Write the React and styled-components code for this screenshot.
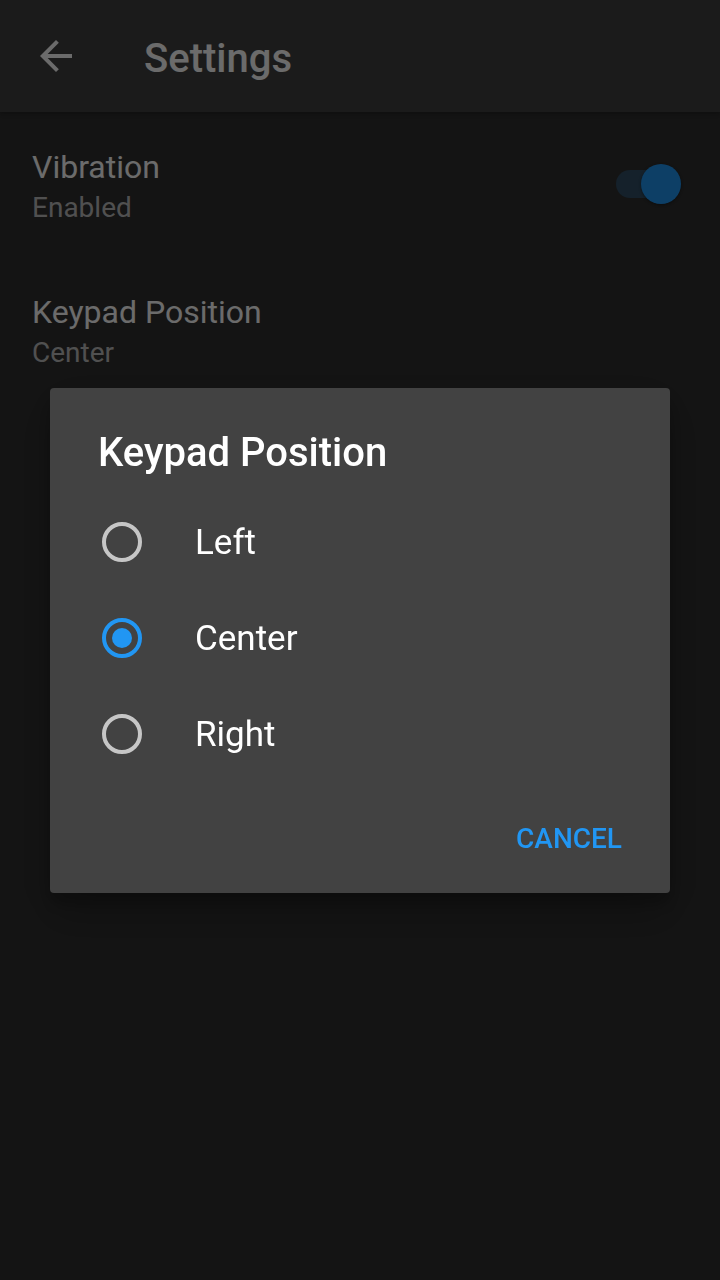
import styled, { createGlobalStyle } from "styled-components";

const GlobalStyle = createGlobalStyle`
    html, body {
        margin: 0;
        padding: 0;
        background: #303030;
        font-family: Roboto, "Liberation Sans", sans-serif;
        -webkit-font-smoothing: antialiased;
    }
`

const StylePage = styled.div`
    width: 720px;
    min-height: 1280px;
    background: #303030;
    color: #ffffff;
`

const StyleAppBar = styled.header`
    height: 112px;
    background: #424242;
    display: flex;
    align-items: center;
    padding-left: 32px;
    box-sizing: border-box;
    box-shadow: 0 2px 4px rgba(0,0,0,.25);
`

const StyleIconButton = styled.button`
    width: 48px;
    height: 48px;
    padding: 0;
    border: none;
    background: none;
    color: #ffffff;
    display: flex;
`

const StyleAppTitle = styled.h1`
    margin: 6px 0 0 64px;
    font-size: 40px;
    line-height: 48px;
    font-weight: 500;
    color: #ffffff;
`

const StyleList = styled.ul`
    list-style: none;
    margin: 0;
    padding: 0;
`

const StyleItem = styled.li`
    height: 145px;
    box-sizing: border-box;
    padding: 35px 39px 0 32px;
    display: flex;
    align-items: flex-start;
    justify-content: space-between;
`

const StyleItemText = styled.div`
    display: flex;
    flex-direction: column;
`

const StyleItemTitle = styled.span`
    font-size: 32px;
    line-height: 40px;
`

const StyleItemSub = styled.span`
    margin-top: 3px;
    font-size: 28px;
    line-height: 36px;
    color: rgba(255,255,255,.7);
`

const StyleSwitch = styled.div`
    position: relative;
    width: 65px;
    height: 40px;
    margin-top: 17px;
    display: flex;
    align-items: center;
`

const StyleTrack = styled.div`
    width: 58px;
    height: 28px;
    border-radius: 14px;
    background: #324f66;
`

const StyleThumb = styled.div`
    position: absolute;
    right: 0;
    top: 0;
    width: 40px;
    height: 40px;
    border-radius: 50%;
    background: #2196f3;
    box-shadow: 0 1px 3px rgba(0,0,0,.4);
`

const StyleScrim = styled.div`
    position: fixed;
    inset: 0;
    background: rgba(0,0,0,.58);
    display: flex;
    align-items: center;
    justify-content: center;
`

const StyleDialog = styled.div`
    width: 620px;
    height: 505px;
    box-sizing: border-box;
    background: #424242;
    border-radius: 4px;
    padding-top: 41px;
    display: flex;
    flex-direction: column;
    box-shadow: 0 24px 38px rgba(0,0,0,.14), 0 9px 46px rgba(0,0,0,.12), 0 11px 15px rgba(0,0,0,.2);
`

const StyleDialogTitle = styled.h2`
    margin: 0 0 17px 48px;
    font-size: 40px;
    line-height: 48px;
    font-weight: 500;
    color: #ffffff;
`

const StyleOption = styled.label`
    height: 96px;
    display: flex;
    align-items: center;
    padding-left: 52px;
`

const StyleRadio = styled.span`
    width: 40px;
    height: 40px;
    box-sizing: border-box;
    border-radius: 50%;
    border: 4px solid ${p => p.checked ? "#2196f3" : "rgba(255,255,255,.7)"};
    display: flex;
    align-items: center;
    justify-content: center;
    &::after {
        content: "";
        width: 20px;
        height: 20px;
        border-radius: 50%;
        background: #2196f3;
        display: ${p => p.checked ? "block" : "none"};
    }
`

const StyleOptionLabel = styled.span`
    margin-left: 53px;
    padding-top: 3px;
    font-size: 35px;
    line-height: 42px;
    color: #ffffff;
`

const StyleActions = styled.div`
    display: flex;
    justify-content: flex-end;
    padding: 21px 48px 0 0;
`

const StyleTextButton = styled.button`
    height: 72px;
    padding: 0;
    border: none;
    background: none;
    font-family: inherit;
    font-size: 28px;
    line-height: 72px;
    font-weight: 500;
    color: #2196f3;
`

const options = ["Left", "Center", "Right"]

export default function App() {
    return(
        <StylePage>
            <GlobalStyle/>
            <StyleAppBar>
                <StyleIconButton aria-label="Back">
                    <svg width="48" height="48" viewBox="0 0 24 24" fill="currentColor">
                        <path d="M20 11H7.83l5.59-5.59L12 4l-8 8 8 8 1.41-1.41L7.83 13H20v-2z"/>
                    </svg>
                </StyleIconButton>
                <StyleAppTitle>Settings</StyleAppTitle>
            </StyleAppBar>
            <StyleList>
                <StyleItem>
                    <StyleItemText>
                        <StyleItemTitle>Vibration</StyleItemTitle>
                        <StyleItemSub>Enabled</StyleItemSub>
                    </StyleItemText>
                    <StyleSwitch>
                        <StyleTrack/>
                        <StyleThumb/>
                    </StyleSwitch>
                </StyleItem>
                <StyleItem>
                    <StyleItemText>
                        <StyleItemTitle>Keypad Position</StyleItemTitle>
                        <StyleItemSub>Center</StyleItemSub>
                    </StyleItemText>
                </StyleItem>
            </StyleList>
            <StyleScrim>
                <StyleDialog>
                    <StyleDialogTitle>Keypad Position</StyleDialogTitle>
                    {options.map(o => (
                        <StyleOption key={o}>
                            <StyleRadio checked={o === "Center"}/>
                            <StyleOptionLabel>{o}</StyleOptionLabel>
                        </StyleOption>
                    ))}
                    <StyleActions>
                        <StyleTextButton>CANCEL</StyleTextButton>
                    </StyleActions>
                </StyleDialog>
            </StyleScrim>
        </StylePage>
    )
}
